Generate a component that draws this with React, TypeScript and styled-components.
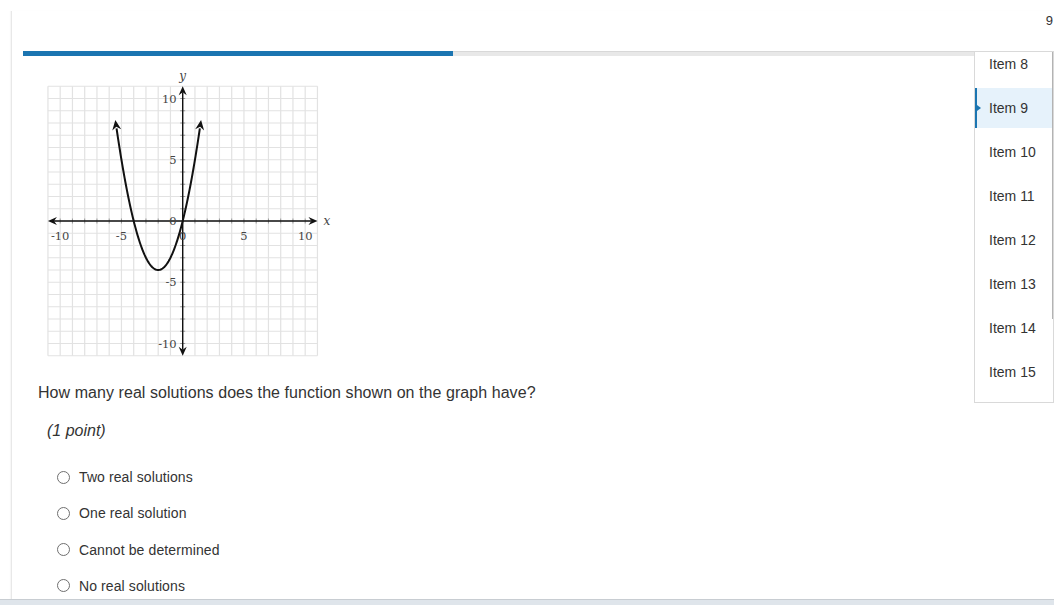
import React from 'react'
import styled, { createGlobalStyle } from 'styled-components'

const GlobalStyle = createGlobalStyle`
  html, body {
    margin: 0;
    padding: 0;
    background: #fff;
  }
  body {
    font-family: 'Liberation Sans', Arial, sans-serif;
    color: #333;
  }
`

const Page = styled.div`
  height: 605px;
  display: flex;
  flex-direction: column;
  overflow: hidden;
`

const Body = styled.div`
  flex: 1;
  display: flex;
  min-height: 0;
`

const Gutter = styled.div`
  width: 11px;
  flex-shrink: 0;
`

const Panel = styled.div`
  flex: 1;
  margin-top: 11px;
  border-left: 1px solid #e8e8e8;
  box-shadow: -1px 0 1px rgba(0, 0, 0, 0.03);
  display: flex;
  flex-direction: column;
  min-width: 0;
`

const Header = styled.div`
  height: 40px;
  box-sizing: border-box;
  padding: 2px 1px 0 0;
  text-align: right;
  font-size: 13px;
  line-height: 15px;
  color: #333;
`

const Content = styled.div`
  display: flex;
  align-items: flex-start;
`

const Main = styled.main`
  flex: 1;
  padding-left: 11px;
  min-width: 0;
`

const Track = styled.div`
  height: 5px;
  box-sizing: border-box;
  background: #e8e8e8;
  border-top: 1px solid #d8d8d8;
`

const Fill = styled.div`
  height: 5px;
  margin-top: -1px;
  background: #1b75b1;
`

const Graph = styled.svg`
  display: block;
  margin: 10px 0 0 15px;
`

const Question = styled.p`
  margin: 17px 0 0 15px;
  font-size: 16px;
  line-height: 20px;
  letter-spacing: 0.06px;
  color: #333;
`

const Points = styled.p`
  margin: 18px 0 0 24px;
  font-size: 16px;
  line-height: 20px;
  font-style: italic;
  color: #333;
`

const Options = styled.ul`
  list-style: none;
  margin: 26px 0 0 34px;
  padding: 0;
  display: flex;
  flex-direction: column;
  gap: 16.3px;
`

const Option = styled.li`
  display: flex;
  align-items: center;
  gap: 9px;
  height: 20px;
  font-size: 14px;
  letter-spacing: 0.1px;
  color: #333;
`

const Radio = styled.span`
  width: 13px;
  height: 13px;
  box-sizing: border-box;
  border-radius: 50%;
  border: 1px solid #6f6f6f;
  background: #fff;
  flex-shrink: 0;
`

const Sidebar = styled.aside`
  position: relative;
  width: 80px;
  height: 352px;
  box-sizing: border-box;
  border: 1px solid #d9d9d9;
  overflow: hidden;
  background: #fff;
  flex-shrink: 0;
`

const ScrollThumb = styled.div`
  position: absolute;
  top: -1px;
  right: -1px;
  width: 2px;
  height: 268px;
  background: #b3b3b3;
`

const ItemList = styled.ul`
  list-style: none;
  margin: -8.5px 0 0;
  padding: 0;
  display: flex;
  flex-direction: column;
  gap: 4px;
`

const Item = styled.li<{ $active?: boolean }>`
  position: relative;
  height: 40px;
  display: flex;
  align-items: center;
  box-sizing: border-box;
  font-size: 14px;
  color: #333;
  padding-left: ${(p) => (p.$active ? '12px' : '14px')};
  margin-left: ${(p) => (p.$active ? '-1px' : '0')};
  background: ${(p) => (p.$active ? '#e6f2fb' : 'transparent')};
  border-left: ${(p) => (p.$active ? '3px solid #1b75b1' : 'none')};

  &::after {
    content: '';
    display: ${(p) => (p.$active ? 'block' : 'none')};
    position: absolute;
    left: 0;
    top: 50%;
    margin-top: -3px;
    border-top: 3px solid transparent;
    border-bottom: 3px solid transparent;
    border-left: 4px solid #1b75b1;
  }
`

const BottomBar = styled.div`
  height: 5px;
  flex-shrink: 0;
  background: #dfe5eb;
  border-top: 1px solid #c8cdd2;
`

const U = 12.25
const OX = 144.7
const OY = 155
const px = (x: number) => OX + x * U
const py = (y: number) => OY - y * U

function arrow(tx: number, ty: number, dx: number, dy: number, L = 10, W = 4.5) {
  const len = Math.hypot(dx, dy)
  const ux = dx / len
  const uy = dy / len
  const bx = tx - ux * L
  const by = ty - uy * L
  const nx = tx - ux * (L - 3)
  const ny = ty - uy * (L - 3)
  const qx = -uy
  const qy = ux
  return `${tx},${ty} ${bx + qx * W},${by + qy * W} ${nx},${ny} ${bx - qx * W},${by - qy * W}`
}

function Parabola() {
  const f = (x: number) => x * x + 4 * x
  const pts: string[] = []
  for (let x = -5.4; x <= 1.4001; x += 0.05) {
    pts.push(`${px(x).toFixed(2)},${py(f(x)).toFixed(2)}`)
  }
  const slopeR = 2 * 1.5 + 4
  const slopeL = 2 * -5.5 + 4
  return (
    <g>
      <polyline points={pts.join(' ')} fill="none" stroke="#111" strokeWidth={2} />
      <polygon points={arrow(px(1.5), py(f(1.5)), 1, -slopeR)} fill="#111" />
      <polygon points={arrow(px(-5.5), py(f(-5.5)), -1, slopeL)} fill="#111" />
    </g>
  )
}

function CoordinateGraph() {
  const units = Array.from({ length: 23 }, (_, i) => i - 11)
  const labels = [-10, -5, 0, 5, 10]
  const labelStyle = {
    fontFamily: "'DejaVu Serif', 'Liberation Serif', serif",
    fontSize: 11.5,
    fill: '#444'
  }
  return (
    <Graph width={300} height={300} viewBox="0 0 300 300">
      {units.map((i) => (
        <g key={i}>
          <line x1={px(i)} y1={py(11)} x2={px(i)} y2={py(-11)} stroke="#e2e2e2" strokeWidth={1.2} />
          <line x1={px(-11)} y1={py(i)} x2={px(11)} y2={py(i)} stroke="#e2e2e2" strokeWidth={1.2} />
        </g>
      ))}
      {units
        .filter((i) => Math.abs(i) < 11 && i !== 0)
        .map((i) => (
          <g key={'t' + i}>
            <line x1={px(i)} y1={OY - 2.5} x2={px(i)} y2={OY + 2.5} stroke="#9a9a9a" strokeWidth={1} />
            <line x1={OX - 2.5} y1={py(i)} x2={OX + 2.5} y2={py(i)} stroke="#9a9a9a" strokeWidth={1} />
          </g>
        ))}
      <line x1={px(-11) + 6} y1={OY} x2={px(11) - 6} y2={OY} stroke="#111" strokeWidth={1.4} />
      <line x1={OX} y1={py(11) + 6} x2={OX} y2={py(-11) - 6} stroke="#111" strokeWidth={1.4} />
      <polygon points={arrow(px(11), OY, 1, 0, 9, 4)} fill="#111" />
      <polygon points={arrow(px(-11), OY, -1, 0, 9, 4)} fill="#111" />
      <polygon points={arrow(OX, py(11), 0, -1, 9, 4)} fill="#111" />
      <polygon points={arrow(OX, py(-11), 0, 1, 9, 4)} fill="#111" />
      {labels.map((v) => (
        <text key={'x' + v} x={px(v)} y={OY + 19} textAnchor="middle" style={labelStyle}>
          {v}
        </text>
      ))}
      {labels.map((v) => (
        <text key={'y' + v} x={OX - 6} y={py(v) + 4} textAnchor="end" style={labelStyle}>
          {v}
        </text>
      ))}
      <text x={px(11) + 6} y={OY + 4} style={{ ...labelStyle, fontStyle: 'italic', fontSize: 12 }}>
        x
      </text>
      <text x={OX} y={py(11) - 6} textAnchor="middle" style={{ ...labelStyle, fontStyle: 'italic', fontSize: 12 }}>
        y
      </text>
      <Parabola />
    </Graph>
  )
}

const choices = [
  'Two real solutions',
  'One real solution',
  'Cannot be determined',
  'No real solutions'
]

const items = [8, 9, 10, 11, 12, 13, 14, 15]

export default function App() {
  return (
    <Page>
      <GlobalStyle />
      <Body>
        <Gutter />
        <Panel>
          <Header>9</Header>
          <Content>
            <Main>
              <Track>
                <Fill style={{ width: `${(430 / 951) * 100}%` }} />
              </Track>
              <CoordinateGraph />
              <Question>How many real solutions does the function shown on the graph have?</Question>
              <Points>(1 point)</Points>
              <Options>
                {choices.map((c) => (
                  <Option key={c}>
                    <Radio />
                    {c}
                  </Option>
                ))}
              </Options>
            </Main>
            <Sidebar>
              <ItemList>
                {items.map((n) => (
                  <Item key={n} $active={n === 9}>
                    Item {n}
                  </Item>
                ))}
              </ItemList>
              <ScrollThumb />
            </Sidebar>
          </Content>
        </Panel>
      </Body>
      <BottomBar />
    </Page>
  )
}
